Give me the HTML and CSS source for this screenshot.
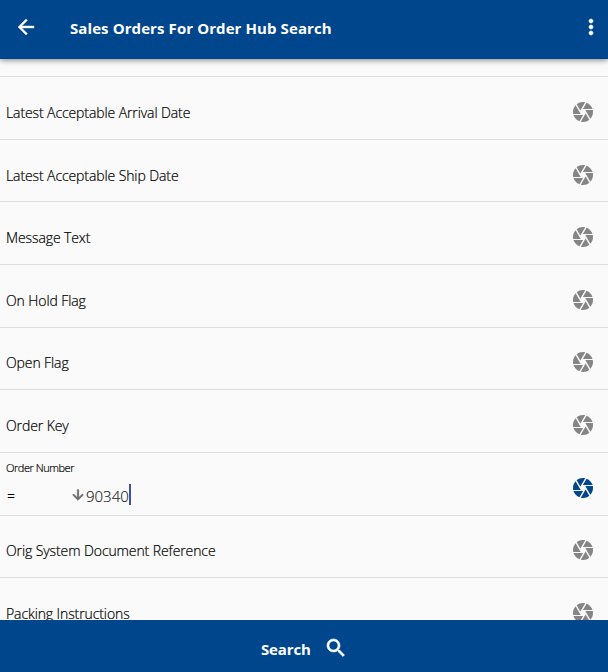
FILE: index.html
```html
<!DOCTYPE html>
<html lang="en">
<head>
<meta charset="utf-8">
<title>Sales Orders For Order Hub Search</title>
<link rel="stylesheet" href="styles.css">
</head>
<body>
<svg class="defs" width="0" height="0">
  <symbol id="shutter" viewBox="0 0 24 24"><path d="M9.4 10.5l4.77-8.26C13.47 2.09 12.75 2 12 2c-2.4 0-4.6.85-6.32 2.25l3.66 6.35.06-.1zM21.54 9c-.92-2.92-3.15-5.26-6-6.34L11.88 9h9.66zm.26 1h-7.49l.29.5 4.76 8.25C21 16.97 22 14.61 22 12c0-.69-.07-1.35-.2-2zM8.54 12l-3.9-6.75C3.01 7.03 2 9.39 2 12c0 .69.07 1.35.2 2h7.49l-1.15-2zm-6.08 3c.92 2.92 3.15 5.26 6 6.34L12.12 15H2.46zm11.27 0l-3.9 6.76c.7.15 1.42.24 2.17.24 2.4 0 4.6-.85 6.32-2.25l-3.66-6.35-.93 1.6z"/></symbol>
</svg>
<div class="app">
  <header class="topbar">
    <svg class="back" viewBox="0 0 24 24"><path d="M20 11H7.83l5.59-5.59L12 4l-8 8 8 8 1.41-1.41L7.83 13H20v-2z"/></svg>
    <h1 class="title">Sales Orders For Order Hub Search</h1>
    <svg class="more" viewBox="0 0 24 24"><path d="M12 8c1.1 0 2-.9 2-2s-.9-2-2-2-2 .9-2 2 .9 2 2 2zm0 2c-1.1 0-2 .9-2 2s.9 2 2 2 2-.9 2-2-.9-2-2-2zm0 6c-1.1 0-2 .9-2 2s.9 2 2 2 2-.9 2-2-.9-2-2-2z"/></svg>
  </header>
  <main class="list">
    <div class="row"><span class="label">Latest Acceptable Arrival Date</span><svg class="icon"><use href="#shutter"/></svg></div>
    <div class="row"><span class="label">Latest Acceptable Ship Date</span><svg class="icon"><use href="#shutter"/></svg></div>
    <div class="row"><span class="label">Message Text</span><svg class="icon"><use href="#shutter"/></svg></div>
    <div class="row"><span class="label">On Hold Flag</span><svg class="icon"><use href="#shutter"/></svg></div>
    <div class="row"><span class="label">Open Flag</span><svg class="icon"><use href="#shutter"/></svg></div>
    <div class="row"><span class="label">Order Key</span><svg class="icon"><use href="#shutter"/></svg></div>
    <div class="row active">
      <div class="field">
        <span class="caption">Order Number</span>
        <div class="entry">
          <span class="operator">=</span>
          <svg class="down" viewBox="0 0 24 24"><path d="M20 12l-1.41-1.41L13 16.17V4h-2v12.17l-5.58-5.59L4 12l8 8 8-8z"/></svg>
          <span class="value">90340</span><span class="caret"></span>
        </div>
      </div>
      <svg class="icon"><use href="#shutter"/></svg>
    </div>
    <div class="row"><span class="label">Orig System Document Reference</span><svg class="icon"><use href="#shutter"/></svg></div>
    <div class="row"><span class="label">Packing Instructions</span><svg class="icon"><use href="#shutter"/></svg></div>
  </main>
  <footer class="search">
    <span class="search-text">Search</span>
    <svg class="glass" viewBox="0 0 24 24"><path d="M15.5 14h-.79l-.28-.27C15.41 12.59 16 11.11 16 9.5 16 5.91 13.09 3 9.5 3S3 5.91 3 9.5 5.91 16 9.5 16c1.61 0 3.09-.59 4.23-1.57l.27.28v.79l5 4.99L20.49 19l-4.99-5zm-6 0C7.01 14 5 11.99 5 9.5S7.01 5 9.5 5 14 7.01 14 9.5 11.99 14 9.5 14z"/></svg>
  </footer>
</div>
</body>
</html>
```
FILE: styles.css
```css
* { box-sizing: border-box; }
body {
  margin: 0;
  font-family: "Open Sans", "Noto Sans", sans-serif;
  background: #fafafa;
  color: #000;
}
svg { flex: none; display: block; }
.defs { display: none; }
.app { display: flex; flex-direction: column; height: 672px; overflow: hidden; }
.topbar {
  flex: none;
  display: flex;
  align-items: center;
  height: 59px;
  padding: 0 5px 5px 14px;
  background: #00468c;
  box-shadow: 0 1px 6px rgba(0, 0, 0, .5);
  color: #fff;
  fill: #fff;
  z-index: 1;
}
.back { width: 24px; height: 24px; stroke: #fff; stroke-width: .4; }
.title {
  flex: 1;
  margin: 2px 0 0 32px;
  font-size: 15px;
  line-height: 22px;
  font-weight: 700;
  letter-spacing: .09px;
  white-space: nowrap;
}
.more { width: 24px; height: 24px; stroke: #fff; stroke-width: .6; }
.list { flex: 1; min-height: 0; overflow: hidden; padding-top: 17.1px; }
.row {
  display: flex;
  align-items: center;
  justify-content: space-between;
  height: 62.65px;
  padding: 8px 13px 0 6px;
  border-top: 1px solid #dedede;
}
.label {
  margin-top: 2px;
  font-size: 14px;
  line-height: 20px;
  font-weight: 300;
  letter-spacing: -.1px;
  -webkit-text-stroke: .2px #000;
  white-space: nowrap;
}
.icon { width: 24px; height: 24px; fill: #858585; }
.active .icon { fill: #00468c; }
.field { display: flex; flex-direction: column; align-self: flex-start; }
.caption { font-size: 11px; line-height: 14px; font-weight: 300; letter-spacing: -.45px; -webkit-text-stroke: .2px #000; }
.entry { display: flex; align-items: center; height: 22px; margin-top: 9px; }
.operator { width: 64px; padding: 2px 0 0 1px; font-size: 14px; }
.down { width: 16px; height: 16px; fill: #666; stroke: #666; }
.value { padding-top: 2px; font-size: 15px; font-weight: 300; color: #222; -webkit-text-stroke: .15px #222; }
.caret { width: 2px; height: 21px; background: #3f51a5; }
.search {
  flex: none;
  display: flex;
  align-items: center;
  height: 52px;
  padding: 4px 0 0 261px;
  gap: 13px;
  background: #00468c;
  color: #fff;
  fill: #fff;
}
.search-text { padding-top: 1px; font-size: 15px; line-height: 20px; font-weight: 700; letter-spacing: -.15px; }
.glass { width: 24px; height: 24px; stroke: #fff; stroke-width: .6; }
```
